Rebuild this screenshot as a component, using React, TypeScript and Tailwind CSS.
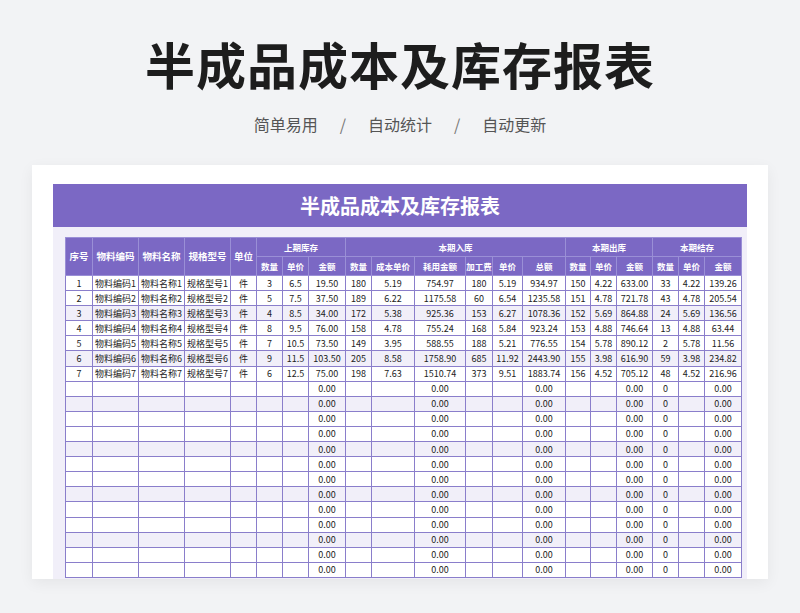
import React from "react";

const widths = [27, 46, 46, 46, 26, 26, 26, 37, 26, 43, 51, 27, 30, 43, 25, 26, 36, 26, 26, 37];
const data = [
  ["1","物料编码1","物料名称1","规格型号1","件","3","6.5","19.50","180","5.19","754.97","180","5.19","934.97","150","4.22","633.00","33","4.22","139.26"],
  ["2","物料编码2","物料名称2","规格型号2","件","5","7.5","37.50","189","6.22","1175.58","60","6.54","1235.58","151","4.78","721.78","43","4.78","205.54"],
  ["3","物料编码3","物料名称3","规格型号3","件","4","8.5","34.00","172","5.38","925.36","153","6.27","1078.36","152","5.69","864.88","24","5.69","136.56"],
  ["4","物料编码4","物料名称4","规格型号4","件","8","9.5","76.00","158","4.78","755.24","168","5.84","923.24","153","4.88","746.64","13","4.88","63.44"],
  ["5","物料编码5","物料名称5","规格型号5","件","7","10.5","73.50","149","3.95","588.55","188","5.21","776.55","154","5.78","890.12","2","5.78","11.56"],
  ["6","物料编码6","物料名称6","规格型号6","件","9","11.5","103.50","205","8.58","1758.90","685","11.92","2443.90","155","3.98","616.90","59","3.98","234.82"],
  ["7","物料编码7","物料名称7","规格型号7","件","6","12.5","75.00","198","7.63","1510.74","373","9.51","1883.74","156","4.52","705.12","48","4.52","216.96"],
];
const empty = ["","","","","","","","0.00","","","0.00","","","0.00","","","0.00","0","","0.00"];
const rows = [...data];
for (let i = 0; i < 13; i++) rows.push(empty);

const font = { fontFamily: '"Noto Sans CJK SC", "Noto Sans", sans-serif' };
const th = "border border-[#9a8fd6] text-white font-bold text-[8.5px] p-0 text-center whitespace-nowrap leading-none";
const td = "border border-[#8a7ecb] text-[9px] text-[#222] p-0 text-center h-[15.1px] leading-none whitespace-nowrap";

export default function App() {
  return (
    <div className="w-[800px] h-[613px] bg-[#f2f3f5] overflow-hidden flex flex-col items-center" style={font}>
      <div className="mt-[32px] text-[50px] font-bold text-[#1d1d1d] leading-[62px] tracking-[1px]">半成品成本及库存报表</div>
      <div className="mt-[19px] flex items-center text-[16px] text-[#555] leading-[22px]">
        <span>简单易用</span>
        <span className="mx-[22px] text-[#777]">/</span>
        <span>自动统计</span>
        <span className="mx-[22px] text-[#777]">/</span>
        <span>自动更新</span>
      </div>
      <div className="mt-[30px] w-[736px] h-[414px] shrink-0 bg-white px-[21px] pt-[19px] shadow-[0_4px_14px_rgba(0,0,0,0.06)] overflow-hidden">
        <div className="h-[43px] bg-[#7b68c4] flex items-center justify-center text-white text-[20px] font-bold">半成品成本及库存报表</div>
        <div className="bg-[#f1eff9] px-[12px] pt-[10px] h-[360px]">
          <table className="border-collapse table-fixed w-[676px]">
            <colgroup>{widths.map((w, i) => <col key={i} style={{ width: w }} />)}</colgroup>
            <thead className="bg-[#7b68c4]">
              <tr className="h-[19px]">
                {["序号","物料编码","物料名称","规格型号","单位"].map(t => <th key={t} rowSpan={2} className={th + " text-[9.5px]"}>{t}</th>)}
                <th colSpan={3} className={th}>上期库存</th>
                <th colSpan={6} className={th}>本期入库</th>
                <th colSpan={3} className={th}>本期出库</th>
                <th colSpan={3} className={th}>本期结存</th>
              </tr>
              <tr className="h-[19px]">
                {["数量","单价","金额","数量","成本单价","耗用金额","加工费","单价","总额","数量","单价","金额","数量","单价","金额"].map((t, i) => <th key={i} className={th}>{t}</th>)}
              </tr>
            </thead>
            <tbody>
              {rows.map((r, i) => (
                <tr key={i} className={(i + 1) % 3 === 0 ? "bg-[#f1eff9]" : "bg-white"}>
                  {r.map((c, j) => <td key={j} className={td}>{c}</td>)}
                </tr>
              ))}
            </tbody>
          </table>
        </div>
      </div>
    </div>
  );
}
